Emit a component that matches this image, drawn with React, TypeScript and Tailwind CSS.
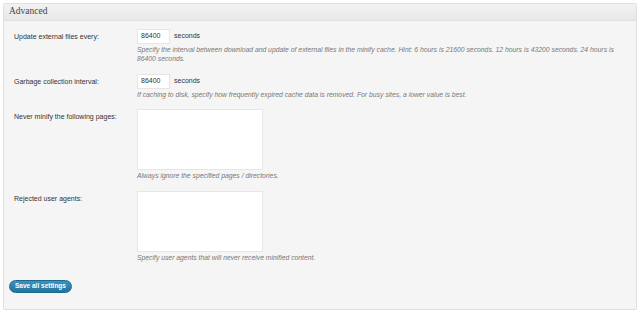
import React from 'react';

const ROWS = [
    {
        label: 'Update external files every:',
        kind: 'seconds' as const,
        value: '86400',
        gap: 'mb-[11px]',
        help: 'Specify the interval between download and update of external files in the minify cache. Hint: 6 hours is 21600 seconds. 12 hours is 43200 seconds. 24 hours is 86400 seconds.',
    },
    {
        label: 'Garbage collection interval:',
        kind: 'seconds' as const,
        value: '86400',
        gap: 'mb-[10px]',
        help: 'If caching to disk, specify how frequently expired cache data is removed. For busy sites, a lower value is best.',
    },
    {
        label: 'Never minify the following pages:',
        kind: 'textarea' as const,
        value: '',
        gap: 'mb-[11px]',
        help: 'Always ignore the specified pages / directories.',
    },
    {
        label: 'Rejected user agents:',
        kind: 'textarea' as const,
        value: '',
        gap: 'mb-[9px]',
        help: 'Specify user agents that will never receive minified content.',
    },
];

export default function App() {
    return (
        <div className="w-[640px] h-[313px] bg-white pt-[3px] px-[3px] font-['Liberation_Sans',Arial,sans-serif]">
            <div className="w-[634px] h-[307px] border border-[#e0e0e0] bg-[#f5f5f5] rounded-[2px] flex flex-col">
                {/* Header */}
                <div className="h-[17px] border-b border-[#e2e2e2] bg-gradient-to-b from-[#f2f2f2] to-[#e8e8e8] flex items-center px-[5px]">
                    <h3 className="font-['Liberation_Serif',serif] text-[9.5px] text-[#464646] leading-none">Advanced</h3>
                </div>

                {/* Rows */}
                <div className="flex flex-col pl-[10px] pr-[14px] pt-[8px]">
                    {ROWS.map((row) => (
                        <div key={row.label} className={`flex ${row.gap}`}>
                            <div className="w-[123px] shrink-0 text-[7px] text-[#333] pt-[3px] leading-[10px]">{row.label}</div>
                            <div className="flex-1 flex flex-col">
                                {row.kind === 'seconds' ? (
                                    <div className="flex items-center gap-[4px]">
                                        <div className="w-[33px] h-[15px] bg-white border border-[#e6e6e6] text-[7px] text-[#333] flex items-center px-[3px]">
                                            {row.value}
                                        </div>
                                        <span className="text-[7px] text-[#333]">seconds</span>
                                    </div>
                                ) : (
                                    <div className="w-[126px] h-[61px] bg-white border border-[#e6e6e6]" />
                                )}
                                <p className="text-[6.8px] italic text-[#777] leading-[9px] mt-[1px]">{row.help}</p>
                            </div>
                        </div>
                    ))}
                </div>

                <div className="pl-[5px]">
                    <button className="h-[13px] px-[5px] rounded-full bg-gradient-to-b from-[#3a92c4] to-[#21759b] border border-[#1e6a8d] text-white text-[6.5px] font-bold leading-none">
                        Save all settings
                    </button>
                </div>
            </div>
        </div>
    );
}
